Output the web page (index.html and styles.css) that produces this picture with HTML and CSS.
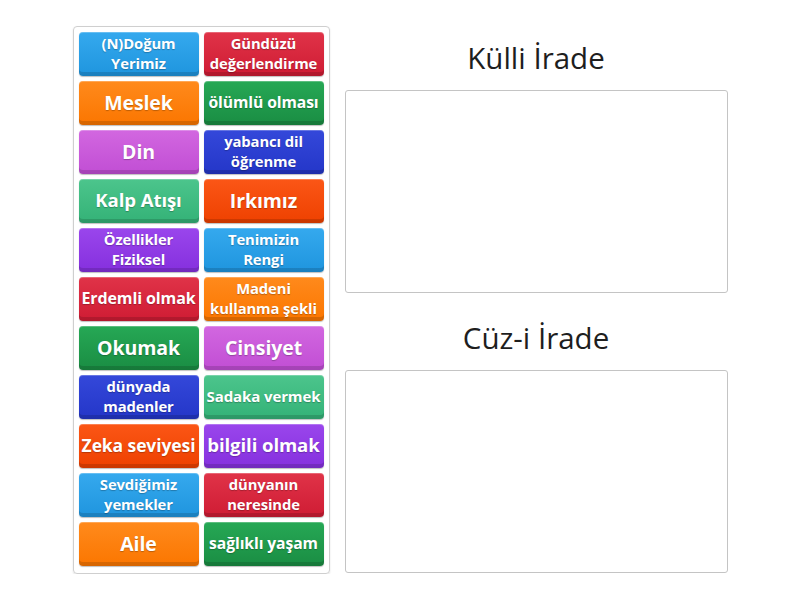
FILE: index.html
```html
<!DOCTYPE html>
<html lang="tr">
<head>
  <meta charset="UTF-8">
  <meta name="viewport" content="width=device-width, initial-scale=1.0">
  <title>Külli İrade / Cüz-i İrade</title>
  <link rel="stylesheet" href="styles.css">
</head>
<body>
  <div class="game">
    <div class="cards">
      <div class="tile blue sm">(N)Doğum<br>Yerimiz</div>
      <div class="tile red sm">Gündüzü<br>değerlendirme</div>
      <div class="tile orange lg">Meslek</div>
      <div class="tile green md">ölümlü olması</div>
      <div class="tile magenta lg">Din</div>
      <div class="tile navy sm">yabancı dil<br>öğrenme</div>
      <div class="tile mint xl">Kalp Atışı</div>
      <div class="tile flame lg">Irkımız</div>
      <div class="tile purple sm">Özellikler<br>Fiziksel</div>
      <div class="tile blue sm">Tenimizin<br>Rengi</div>
      <div class="tile red mx">Erdemli olmak</div>
      <div class="tile orange sm">Madeni<br>kullanma şekli</div>
      <div class="tile green lg">Okumak</div>
      <div class="tile magenta lg">Cinsiyet</div>
      <div class="tile navy sm">dünyada<br>madenler</div>
      <div class="tile mint ms">Sadaka vermek</div>
      <div class="tile flame ml">Zeka seviyesi</div>
      <div class="tile purple xl">bilgili olmak</div>
      <div class="tile blue sm">Sevdiğimiz<br>yemekler</div>
      <div class="tile red sm">dünyanın<br>neresinde</div>
      <div class="tile orange lg">Aile</div>
      <div class="tile green md">sağlıklı yaşam</div>
    </div>

    <div class="groups">
      <h2 class="group-title">Külli İrade</h2>
      <div class="drop"></div>
      <h2 class="group-title second">Cüz-i İrade</h2>
      <div class="drop"></div>
    </div>
  </div>
</body>
</html>
```

FILE: styles.css
```css
body {
    margin: 0;
    padding: 0;
    background-color: #ffffff;
    font-family: "Open Sans", "DejaVu Sans", sans-serif;
}

.game {
    display: flex;
    justify-content: center;
    gap: 15px;
    padding-top: 26px;
}

.cards {
    width: 257px;
    height: 548px;
    box-sizing: border-box;
    border: 1px solid #cfcfcf;
    border-radius: 4px;
    box-shadow: 0 1px 2px rgba(0, 0, 0, 0.12);
    padding: 5px 4px 5px 5px;
    display: grid;
    grid-template-columns: 120px 120px;
    grid-auto-rows: 44px;
    column-gap: 5px;
    row-gap: 5px;
}

.tile {
    display: flex;
    align-items: center;
    justify-content: center;
    text-align: center;
    color: #ffffff;
    font-weight: 700;
    line-height: 1.3;
    border-radius: 4px;
    white-space: nowrap;
    letter-spacing: -0.1px;
    text-shadow: 0 1px 1px rgba(0, 0, 0, 0.25);
    box-shadow: inset 0 -4px 0 rgba(0, 0, 0, 0.14), inset 0 1px 0 rgba(255, 255, 255, 0.25), 0 1px 1px rgba(0, 0, 0, 0.25);
    padding-bottom: 1px;
    box-sizing: border-box;
}

.sm { font-size: 14.8px; line-height: 19.5px; }
.ms { font-size: 15px; }
.md { font-size: 15.7px; }
.mx { font-size: 16px; }
.ml { font-size: 17.5px; }
.xl { font-size: 18.6px; }
.lg { font-size: 19.5px; }

.blue    { background: linear-gradient(#35a9ee, #1f95de); }
.red     { background: linear-gradient(#e03348, #cf1c34); }
.orange  { background: linear-gradient(#ff8a1c, #fb7600); }
.green   { background: linear-gradient(#26a855, #1a8d43); }
.magenta { background: linear-gradient(#d267e0, #c14ed4); }
.navy    { background: linear-gradient(#3448da, #2436c8); }
.mint    { background: linear-gradient(#4cc58c, #34b277); }
.flame   { background: linear-gradient(#fb5616, #ee4100); }
.purple  { background: linear-gradient(#9a46ec, #8530de); }

.groups {
    width: 383px;
    display: flex;
    flex-direction: column;
}

.group-title {
    margin: 0;
    height: 64px;
    line-height: 64px;
    text-align: center;
    font-size: 29.5px;
    font-weight: 400;
    color: #1e1e1e;
}

.group-title.second {
    margin-top: 13px;
}

.drop {
    height: 203px;
    box-sizing: border-box;
    border: 1px solid #c4c4c4;
    border-radius: 3px;
    background-color: #ffffff;
}
```
